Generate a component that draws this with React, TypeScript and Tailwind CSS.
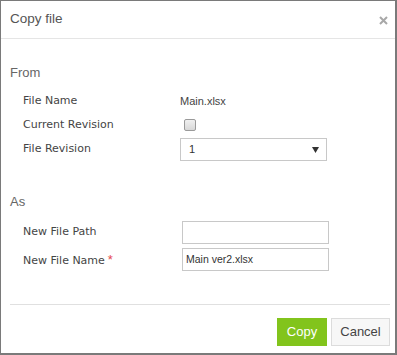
const labelFont = "font-['DejaVu_Sans',sans-serif] text-[11px] text-[#444]";
const arial = "font-['Liberation_Sans',Arial,sans-serif]";

function Row({ label, required, children, h }: { label: string; required?: boolean; children: React.ReactNode; h: string }) {
  return (
    <div className={`flex items-center ${h}`}>
      <div className={`${labelFont} w-[179px] shrink-0 pl-[22px]`}>
        {label}
        {required && <span className={`${arial} ml-[3px] text-[13px] text-[#e5484d]`}>*</span>}
      </div>
      {children}
    </div>
  );
}

export default function App() {
  return (
    <div className="flex h-[355px] w-[397px] flex-col border-t border-l border-r-2 border-b-2 border-[#7a7a7a] bg-white">
      {/* Header */}
      <div className="flex h-[38px] shrink-0 items-center justify-between border-b border-[#e5e5e5] pl-[9px] pr-[7px]">
        <span className={`${arial} text-[13.5px] text-[#555]`}>Copy file</span>
        <svg width="9" height="9" viewBox="0 0 9 9" className="mt-[1px]">
          <path d="M1 1L8 8M8 1L1 8" stroke="#a8a8a8" strokeWidth="2" />
        </svg>
      </div>

      {/* Body */}
      <div className="flex flex-1 flex-col">
        <div className={`${arial} mt-[24px] pl-[9px] text-[13px] leading-[20px] text-[#666]`}>From</div>
        <div className="mt-[6px]">
          <Row label="File Name" h="h-[24px]">
            <span className={`${arial} text-[11px] text-[#444]`}>Main.xlsx</span>
          </Row>
          <Row label="Current Revision" h="h-[24px]">
            <span className="ml-[4px] h-[12px] w-[12px] rounded-[2px] border border-[#9a9a9a] bg-gradient-to-b from-[#f0f0f0] to-[#d8d8d8]" />
          </Row>
          <Row label="File Revision" h="h-[25px]">
            <div className="flex h-[23px] w-[147px] items-center justify-between border border-[#c8c8c8] bg-white pl-[8px] pr-[7px]">
              <span className={`${arial} text-[11px] text-[#333]`}>1</span>
              <svg width="7" height="6" viewBox="0 0 7 6">
                <path d="M0 0H7L3.5 6Z" fill="#333" />
              </svg>
            </div>
          </Row>
        </div>

        <div className={`${arial} mt-[30px] pl-[9px] text-[13px] leading-[20px] text-[#666]`}>As</div>
        <div className="mt-[7px]">
          <Row label="New File Path" h="h-[27px]">
            <div className="ml-[2px] h-[23px] w-[147px] border border-[#c8c8c8] bg-white" />
          </Row>
          <Row label="New File Name" required h="h-[27px]">
            <div className={`${arial} ml-[2px] flex h-[23px] w-[147px] items-center border border-[#c8c8c8] bg-white pl-[3px] text-[10.5px] text-[#333]`}>
              Main ver2.xlsx
            </div>
          </Row>
        </div>

        {/* Footer */}
        <div className="mt-auto">
          <div className="ml-[9px] mr-[5px] border-t border-[#e0e0e0]" />
          <div className="flex justify-end gap-[4px] pt-[13px] pb-[7px] pr-[5px]">
            <button className={`${arial} h-[28px] w-[50px] bg-[#82c41c] text-[13px] text-white`}>Copy</button>
            <button className={`${arial} h-[28px] w-[59px] border border-[#dcdcdc] bg-[#f7f7f7] text-[13px] text-[#444]`}>Cancel</button>
          </div>
        </div>
      </div>
    </div>
  );
}
